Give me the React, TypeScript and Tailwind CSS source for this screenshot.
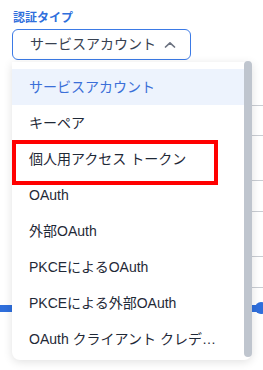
import { useState } from 'react';

const options = [
  'サービスアカウント',
  'キーペア',
  '個人用アクセス トークン',
  'OAuth',
  '外部OAuth',
  'PKCEによるOAuth',
  'PKCEによる外部OAuth',
  'OAuth クライアント クレデ…',
];

const ChevronUp = () => (
  <svg width="12" height="12" viewBox="0 0 12 12" fill="none" stroke="#6b7280" strokeWidth="1.7" strokeLinecap="round" strokeLinejoin="round">
    <path d="M1.5 8 6 3.8 10.5 8" />
  </svg>
);

const App = () => {
  const [selected] = useState(0);
  const font = { fontFamily: '"Liberation Sans", "Noto Sans CJK JP", sans-serif' };
  return (
    <div className="relative w-[263px] h-[370px] bg-white overflow-hidden" style={font}>
      <div className="px-3 pt-[10px]">
        <div className="text-[12px] font-bold text-[#2f6fdc] leading-[16px] pl-[1px]">認証タイプ</div>
        <button className="mt-[3px] w-[179px] h-[31px] border border-[#3b7ae6] rounded-[6px] flex items-center pl-[17px] gap-[8px] text-[14px] text-[#374151] bg-white">
          <span>サービスアカウント</span>
          <ChevronUp />
        </button>
      </div>

      {/* content behind the menu */}
      <div className="pl-5 mt-[45px]">
        <div className="h-[1px] bg-[#c9cdd3]" />
        <div className="h-[30px] border-b border-[#c9cdd3]" />
        <div className="h-[45px] border-b border-[#c9cdd3]" />
        <div className="h-[31px] border-b border-[#c9cdd3]" />
        <div className="h-[45px] border-b border-[#c9cdd3]" />
        <div className="h-[31px] border-b border-[#c9cdd3]" />
      </div>
      <div className="mt-[14px] flex items-center">
        <div className="flex-1 h-[7px] bg-[#2f6fdc]" />
        <div className="w-[12px] h-[12px] rounded-full bg-[#2f6fdc] ml-[-4px] mr-[-4px]" />
      </div>

      {/* dropdown */}
      <div className="absolute left-3 top-[62px] w-[240px] h-[298px] bg-white rounded-b-[8px] shadow-[0_2px_10px_rgba(0,0,0,0.12)] flex">
        <ul className="flex-1 pt-[7px] min-w-0">
          {options.map((o, i) => (
            <li
              key={o}
              className={
                'h-[36px] flex items-center pl-[17px] pr-2 text-[14px] whitespace-nowrap ' +
                (i === selected ? 'bg-[#edf3fd] text-[#3b6fd8]' : 'text-[#1f2937]')
              }
            >
              {o}
            </li>
          ))}
        </ul>
        <div className="w-[8px] mt-[-1px] mb-[3px] rounded-[4px] bg-[#bfc5ce]" />
      </div>

      {/* highlight */}
      <div className="absolute left-3 top-[140px] w-[206px] h-[45px] border-[4px] border-[#ff0000]" />
    </div>
  );
};

export default App;
